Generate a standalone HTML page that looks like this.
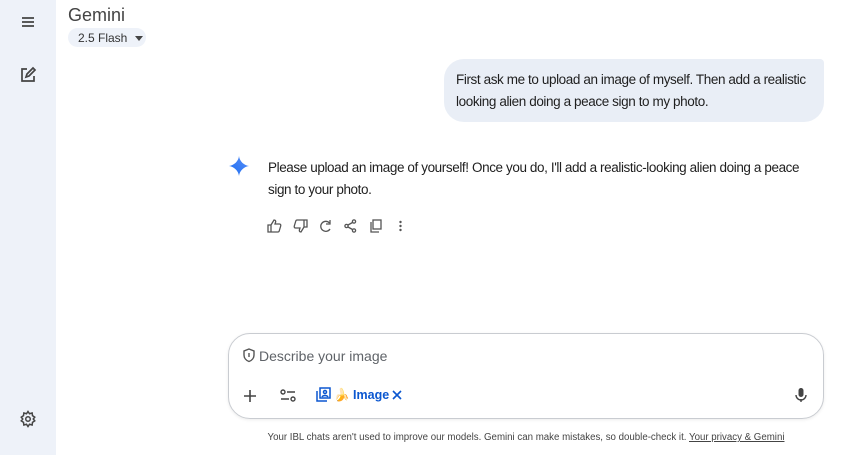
<!DOCTYPE html>
<html><head><style>
*{margin:0;padding:0;box-sizing:border-box}
body{width:860px;height:455px;background:#fff;font-family:"Liberation Sans",sans-serif;color:#1f1f1f;position:relative;overflow:hidden}
.side{position:absolute;left:0;top:0;width:56px;height:455px;background:#eef2f9}
.abs{position:absolute}
svg{display:block}
.t{font-size:13.5px;letter-spacing:-0.4px;line-height:22px}
</style></head><body>
<div class="side"></div>
<svg class="abs" style="left:20px;top:15px" width="16" height="14" viewBox="0 0 16 14"><path d="M2 3h12M2 7h12M2 11h12" stroke="#444" stroke-width="1.8"/></svg>
<svg class="abs" style="left:19px;top:66px" width="18" height="18" viewBox="0 0 18 18" fill="none" stroke="#444" stroke-width="1.7"><path d="M8 3H3v12h12V10"/><path d="M7 11l1-3 6-6 2 2-6 6z"/></svg>
<svg class="abs" style="left:19px;top:410px" width="18" height="18" viewBox="0 0 24 24" fill="none" stroke="#444" stroke-width="2"><circle cx="12" cy="12" r="3"/><path d="M12 2l2 3 3.5-1 .5 3.5 3 2-2 2.5 2 2.5-3 2-.5 3.5-3.5-1-2 3-2-3-3.5 1-.5-3.5-3-2 2-2.5-2-2.5 3-2 .5-3.5 3.5 1z"/></svg>

<div class="abs" style="left:68px;top:5px;font-size:18px;color:#444">Gemini</div>
<div class="abs" style="left:68px;top:28px;width:78px;height:19px;background:#eef2f9;border-radius:10px;font-size:12px;color:#333;padding:3px 0 0 10px">2.5 Flash <span style="display:inline-block;border:4px solid transparent;border-top:5px solid #444;margin-left:4px;vertical-align:-3px"></span></div>

<div class="abs t" style="left:444px;top:59px;width:380px;height:63px;background:#e9eef6;border-radius:20px 4px 20px 20px;padding:10px 12px">First ask me to upload an image of myself. Then add a realistic looking alien doing a peace sign to my photo.</div>

<svg class="abs" style="left:229px;top:156px" width="20" height="20" viewBox="0 0 20 20"><defs><linearGradient id="g" x1="0" y1="1" x2="1" y2="0"><stop offset="0" stop-color="#1a6df0"/><stop offset="1" stop-color="#5b8ff9"/></linearGradient></defs><path d="M10 0C10.5 5 15 9.5 20 10 15 10.5 10.5 15 10 20 9.5 15 5 10.5 0 10 5 9.5 9.5 5 10 0z" fill="url(#g)"/></svg>
<div class="abs t" style="left:268px;top:157px;width:556px">Please upload an image of yourself! Once you do, I'll add a realistic-looking alien doing a peace sign to your photo.</div>

<svg class="abs" style="left:267px;top:219px" width="145" height="14" viewBox="0 0 145 14" fill="none" stroke="#555" stroke-width="1.3">
<path d="M1 6h3v7H1zM4 6l3-5c1.5 0 2 1 1.5 2.5L8 5h4.5c1 0 1.5 1 1.2 2l-1.5 5c-.2.7-.7 1-1.4 1H4"/>
<g transform="translate(27,0)"><path d="M13 8h-3V1h3zM10 8l-3 5c-1.5 0-2-1-1.5-2.5L6 9H1.5C.5 9 0 8 .3 7l1.5-5C2 1.3 2.5 1 3.2 1H10"/></g>
<g transform="translate(52,1)"><path d="M10.5 3A5 5 0 1 0 11 9"/><path d="M11 0v4H7"/></g>
<g transform="translate(77,0)"><circle cx="10" cy="2.5" r="1.6"/><circle cx="2.5" cy="7" r="1.6"/><circle cx="10" cy="11.5" r="1.6"/><path d="M4 6l4.5-2.5M4 8l4.5 2.5"/></g>
<g transform="translate(103,0)"><rect x="3" y="1" width="8" height="9"/><path d="M1 3v10h8"/></g>
<g transform="translate(132,0)" fill="#555" stroke="none"><circle cx="1.5" cy="3" r="1.2"/><circle cx="1.5" cy="7" r="1.2"/><circle cx="1.5" cy="11" r="1.2"/></g>
</svg>

<div class="abs" style="left:228px;top:333px;width:596px;height:86px;border:1px solid #c9ccd1;border-radius:22px;box-shadow:0 1px 3px rgba(0,0,0,.08)"></div>
<svg class="abs" style="left:242px;top:348px" width="14" height="15" viewBox="0 0 14 15" fill="none" stroke="#555" stroke-width="1.4"><path d="M7 1l5 2v4c0 3-2 5.5-5 6.5C4 12.5 2 10 2 7V3z"/><path d="M7 5v4"/></svg>
<div class="abs" style="left:259px;top:348px;font-size:14px;color:#5f6368">Describe your image</div>
<svg class="abs" style="left:243px;top:389px" width="14" height="14" viewBox="0 0 14 14"><path d="M7 1v12M1 7h12" stroke="#444" stroke-width="1.6"/></svg>
<svg class="abs" style="left:280px;top:388px" width="16" height="15" viewBox="0 0 16 15" fill="none" stroke="#444" stroke-width="1.4"><circle cx="3" cy="4" r="2"/><path d="M7 4h8M1 11h8"/><circle cx="13" cy="11" r="2"/></svg>
<svg class="abs" style="left:316px;top:387px" width="15" height="15" viewBox="0 0 15 15" fill="none" stroke="#0b57d0" stroke-width="1.5"><rect x="4" y="1" width="10" height="10"/><path d="M1 4v10h10"/><circle cx="9" cy="5" r="1.5"/><path d="M6 10c1-2 5-2 6 0"/></svg>
<div class="abs" style="left:334px;top:388px;font-size:12.5px;color:#0b57d0">🍌 <span style="font-weight:600">Image</span></div>
<svg class="abs" style="left:392px;top:390px" width="10" height="10" viewBox="0 0 10 10"><path d="M1 1l8 8M9 1l-8 8" stroke="#0b57d0" stroke-width="1.6"/></svg>
<svg class="abs" style="left:795px;top:387px" width="12" height="16" viewBox="0 0 12 16" fill="#444"><rect x="3.5" y="1" width="5" height="9" rx="2.5"/><path d="M1 8a5 5 0 0 0 10 0" fill="none" stroke="#444" stroke-width="1.4"/><rect x="5.3" y="12" width="1.4" height="3"/></svg>

<div class="abs" style="left:0;width:1052px;top:432px;text-align:center;font-size:9.7px;color:#444">Your IBL chats aren't used to improve our models. Gemini can make mistakes, so double-check it. <span style="text-decoration:underline">Your privacy &amp; Gemini</span></div>
</body></html>
